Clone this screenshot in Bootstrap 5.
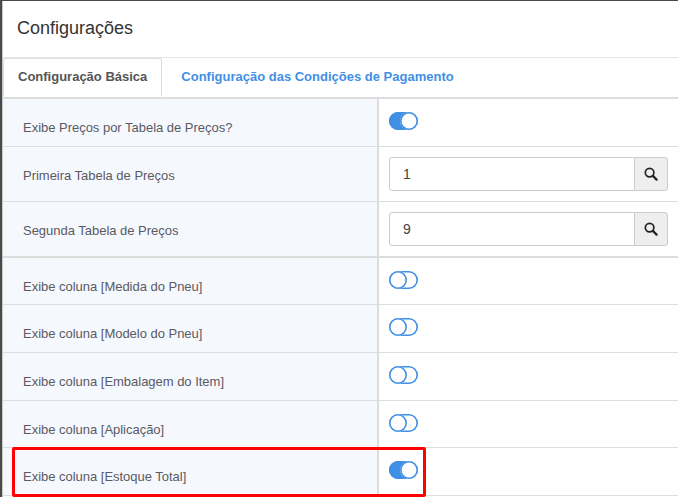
<!DOCTYPE html>
<html lang="pt-BR">
<head>
<meta charset="utf-8">
<title>Configurações</title>
<link rel="stylesheet" href="https://cdn.jsdelivr.net/npm/bootstrap@5.3.0/dist/css/bootstrap.min.css">
<style>
html, body { height: 100%; }
body { margin: 0; background: #4a4a4a; font-family: "Liberation Sans", Arial, sans-serif; overflow: hidden; padding: 1px 0 0 2px; position: relative; }
.cfg-panel { background: #fff; height: 496px; border-left: 1px solid #c8c8c8; }
.cfg-head { flex: 0 0 57px; border-bottom: 1px solid #e5e5e5; padding: 17px 0 0 14px; margin: 0; font-size: 18px; line-height: 20px; font-weight: 400; color: #333; }
.cfg-tabs { flex: 0 0 41px; border-bottom: 2px solid #ddd; flex-wrap: nowrap; }
.cfg-tabs .nav-link { height: 39px; font-size: 13px; font-weight: 700; line-height: 18px; padding: 10px 15px; margin: 0 4px 0 0; border-radius: 3px 3px 0 0; color: #428fe6; }
.cfg-tabs .nav-link.active { color: #555; background: #fff; border: 1px solid #ddd; border-bottom-color: #fff; padding: 9px 14px 10px; margin: 0 4px 0 0; }
.cfg-row { display: flex; border-bottom: 1px solid #ddd; height: 48px; }
.cfg-row.tall { height: 55px; }
.cfg-row.group-end { border-bottom-width: 2px; height: 56px; }
.cfg-row.slim { height: 47px; }
.cfg-label { flex: 0 0 376px; background: #f5f8fd; border-right: 2px solid #ddd; padding: 22px 0 0 20px; font-size: 13px; line-height: 14px; color: #5a5a64; letter-spacing: -.02px; }
.cfg-value { flex: 1 1 auto; padding: 13px 10px 0 10px; min-width: 0; }
.cfg-row.tall .cfg-value, .cfg-row.group-end .cfg-value { padding-top: 10px; }
.cfg-switch { display: block; position: relative; width: 29px; height: 18px; box-shadow: inset 0 0 0 1.6px #3f8fe4; border-radius: 9px; background: #fff; }
.cfg-switch::before { content: ""; position: absolute; left: 0; top: 0; width: 18px; height: 18px; border-radius: 50%; background: #fff; box-shadow: inset 0 0 0 1.6px #3f8fe4; }
.cfg-switch.on { background: #3f8fe4; }
.cfg-switch.on::before { left: 11px; }
.cfg-field { width: 279px; height: 34px; flex-wrap: nowrap; }
.cfg-field .form-control { height: 34px; font-size: 14px; line-height: 20px; padding: 6px 13px; color: #444; border-color: #ccc; border-radius: 3px 0 0 3px; font-family: inherit; }
.cfg-field .btn { width: 34px; height: 34px; padding: 0; background: #eee; border-color: #ccc; border-radius: 0 3px 3px 0; display: flex; align-items: center; justify-content: center; margin-left: -1px; }
.cfg-mark { position: absolute; left: 12px; top: 447px; width: 414px; height: 50px; border: 3px solid #fe0000; border-radius: 2px; pointer-events: none; }
</style>
</head>
<body>
<div class="cfg-panel d-flex flex-column">
  <h5 class="cfg-head">Configurações</h5>
  <ul class="nav nav-tabs cfg-tabs">
    <li class="nav-item"><a class="nav-link active" href="#">Configuração Básica</a></li>
    <li class="nav-item"><a class="nav-link border-0" href="#">Configuração das Condições de Pagamento</a></li>
  </ul>
  <div>
    <div class="cfg-row">
      <div class="cfg-label">Exibe Preços por Tabela de Preços?</div>
      <div class="cfg-value"><span class="cfg-switch on"></span></div>
    </div>
    <div class="cfg-row tall">
      <div class="cfg-label">Primeira Tabela de Preços</div>
      <div class="cfg-value">
        <div class="input-group cfg-field">
          <input class="form-control" type="text" value="1" aria-label="Primeira Tabela de Preços">
          <button class="btn" type="button" aria-label="Buscar"><svg width="14" height="14" viewBox="0 0 14 14" fill="none" stroke="#222" aria-hidden="true"><circle cx="5.6" cy="5.6" r="4.3" stroke-width="1.7"/><path d="M8.9 8.9 L12.6 12.6" stroke-width="2.2" stroke-linecap="round"/></svg></button>
        </div>
      </div>
    </div>
    <div class="cfg-row group-end">
      <div class="cfg-label">Segunda Tabela de Preços</div>
      <div class="cfg-value">
        <div class="input-group cfg-field">
          <input class="form-control" type="text" value="9" aria-label="Segunda Tabela de Preços">
          <button class="btn" type="button" aria-label="Buscar"><svg width="14" height="14" viewBox="0 0 14 14" fill="none" stroke="#222" aria-hidden="true"><circle cx="5.6" cy="5.6" r="4.3" stroke-width="1.7"/><path d="M8.9 8.9 L12.6 12.6" stroke-width="2.2" stroke-linecap="round"/></svg></button>
        </div>
      </div>
    </div>
    <div class="cfg-row slim">
      <div class="cfg-label">Exibe coluna [Medida do Pneu]</div>
      <div class="cfg-value"><span class="cfg-switch"></span></div>
    </div>
    <div class="cfg-row">
      <div class="cfg-label">Exibe coluna [Modelo do Pneu]</div>
      <div class="cfg-value"><span class="cfg-switch"></span></div>
    </div>
    <div class="cfg-row">
      <div class="cfg-label">Exibe coluna [Embalagem do Item]</div>
      <div class="cfg-value"><span class="cfg-switch"></span></div>
    </div>
    <div class="cfg-row slim">
      <div class="cfg-label">Exibe coluna [Aplicação]</div>
      <div class="cfg-value"><span class="cfg-switch"></span></div>
    </div>
    <div class="cfg-row">
      <div class="cfg-label">Exibe coluna [Estoque Total]</div>
      <div class="cfg-value"><span class="cfg-switch on"></span></div>
    </div>
  </div>
</div>
<div class="cfg-mark"></div>
</body>
</html>
